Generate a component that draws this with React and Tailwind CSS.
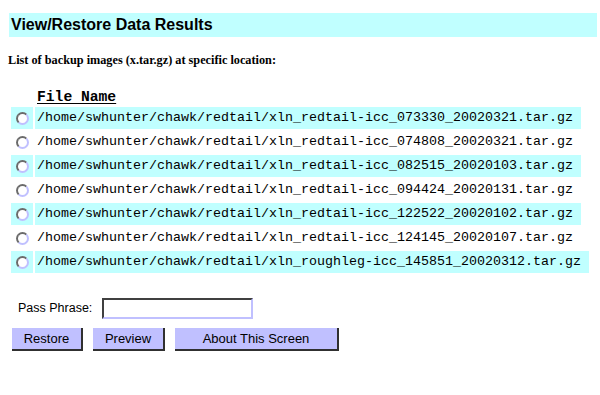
import React from "react";

const files = [
  "/home/swhunter/chawk/redtail/xln_redtail-icc_073330_20020321.tar.gz",
  "/home/swhunter/chawk/redtail/xln_redtail-icc_074808_20020321.tar.gz",
  "/home/swhunter/chawk/redtail/xln_redtail-icc_082515_20020103.tar.gz",
  "/home/swhunter/chawk/redtail/xln_redtail-icc_094424_20020131.tar.gz",
  "/home/swhunter/chawk/redtail/xln_redtail-icc_122522_20020102.tar.gz",
  "/home/swhunter/chawk/redtail/xln_redtail-icc_124145_20020107.tar.gz",
  "/home/swhunter/chawk/redtail/xln_roughleg-icc_145851_20020312.tar.gz",
];

function Radio() {
  return (
    <span className="block w-[13px] h-[13px] rounded-full bg-white border-2 border-t-[#6b6b6b] border-l-[#6b6b6b] border-b-[#c0c0ff] border-r-[#c0c0ff]" />
  );
}

export default function App() {
  return (
    <div className="w-[600px] h-[395px] bg-white text-black overflow-hidden">
      <div className="pt-[13px] pl-[9px]">
        <div className="w-[588px] h-[24px] bg-[#c0ffff] flex items-center pl-[2px] font-['Liberation_Sans',Arial,sans-serif] font-bold text-[16px] leading-none">
          View/Restore Data Results
        </div>
      </div>
      <div className="mt-[15px] pl-[8px] h-[16px] leading-[16px] font-['Liberation_Serif','Times_New_Roman',serif] font-bold text-[12.25px]">
        List of backup images (x.tar.gz) at specific location:
      </div>
      <div className="mt-[21px] pl-[37px] h-[18px] leading-[16px] font-['Liberation_Mono','Courier_New',monospace] font-bold text-[14.67px] underline underline-offset-2">
        File Name
      </div>
      <div className="flex flex-col gap-[2px] pl-[11px]">
        {files.map((f, i) => {
          const shaded = i % 2 === 0;
          return (
            <div key={i} className="flex gap-[2px] h-[22px]">
              <div className={`w-[22px] h-[22px] flex items-center justify-center ${shaded ? "bg-[#c0ffff]" : ""}`}>
                <Radio />
              </div>
              <div className={`h-[22px] flex items-center pl-[2px] pr-[8px] font-['Liberation_Mono','Courier_New',monospace] text-[13.33px] leading-none whitespace-nowrap ${shaded ? "bg-[#c0ffff]" : ""}`}>
                {f}
              </div>
            </div>
          );
        })}
      </div>
      <div className="mt-[25px] flex items-center pl-[18px] font-['Liberation_Sans',Arial,sans-serif] text-[12.5px]">
        <span className="w-[84px]">Pass Phrase:</span>
        <input
          type="password"
          className="w-[151px] h-[21px] bg-white border-2 border-t-[#404040] border-l-[#404040] border-b-[#c0c0ff] border-r-[#c0c0ff] outline-none"
        />
      </div>
      <div className="mt-[9px] flex gap-[10px] pl-[12px] font-['Liberation_Sans',Arial,sans-serif] text-[13px]">
        <button className="w-[71px] h-[23px] bg-[#c0c0ff] border-r-2 border-b-2 border-r-[#303030] border-b-[#303030] leading-none">
          Restore
        </button>
        <button className="w-[72px] h-[23px] bg-[#c0c0ff] border-r-2 border-b-2 border-r-[#303030] border-b-[#303030] leading-none">
          Preview
        </button>
        <button className="w-[164px] h-[23px] bg-[#c0c0ff] border-r-2 border-b-2 border-r-[#303030] border-b-[#303030] leading-none">
          About This Screen
        </button>
      </div>
    </div>
  );
}
